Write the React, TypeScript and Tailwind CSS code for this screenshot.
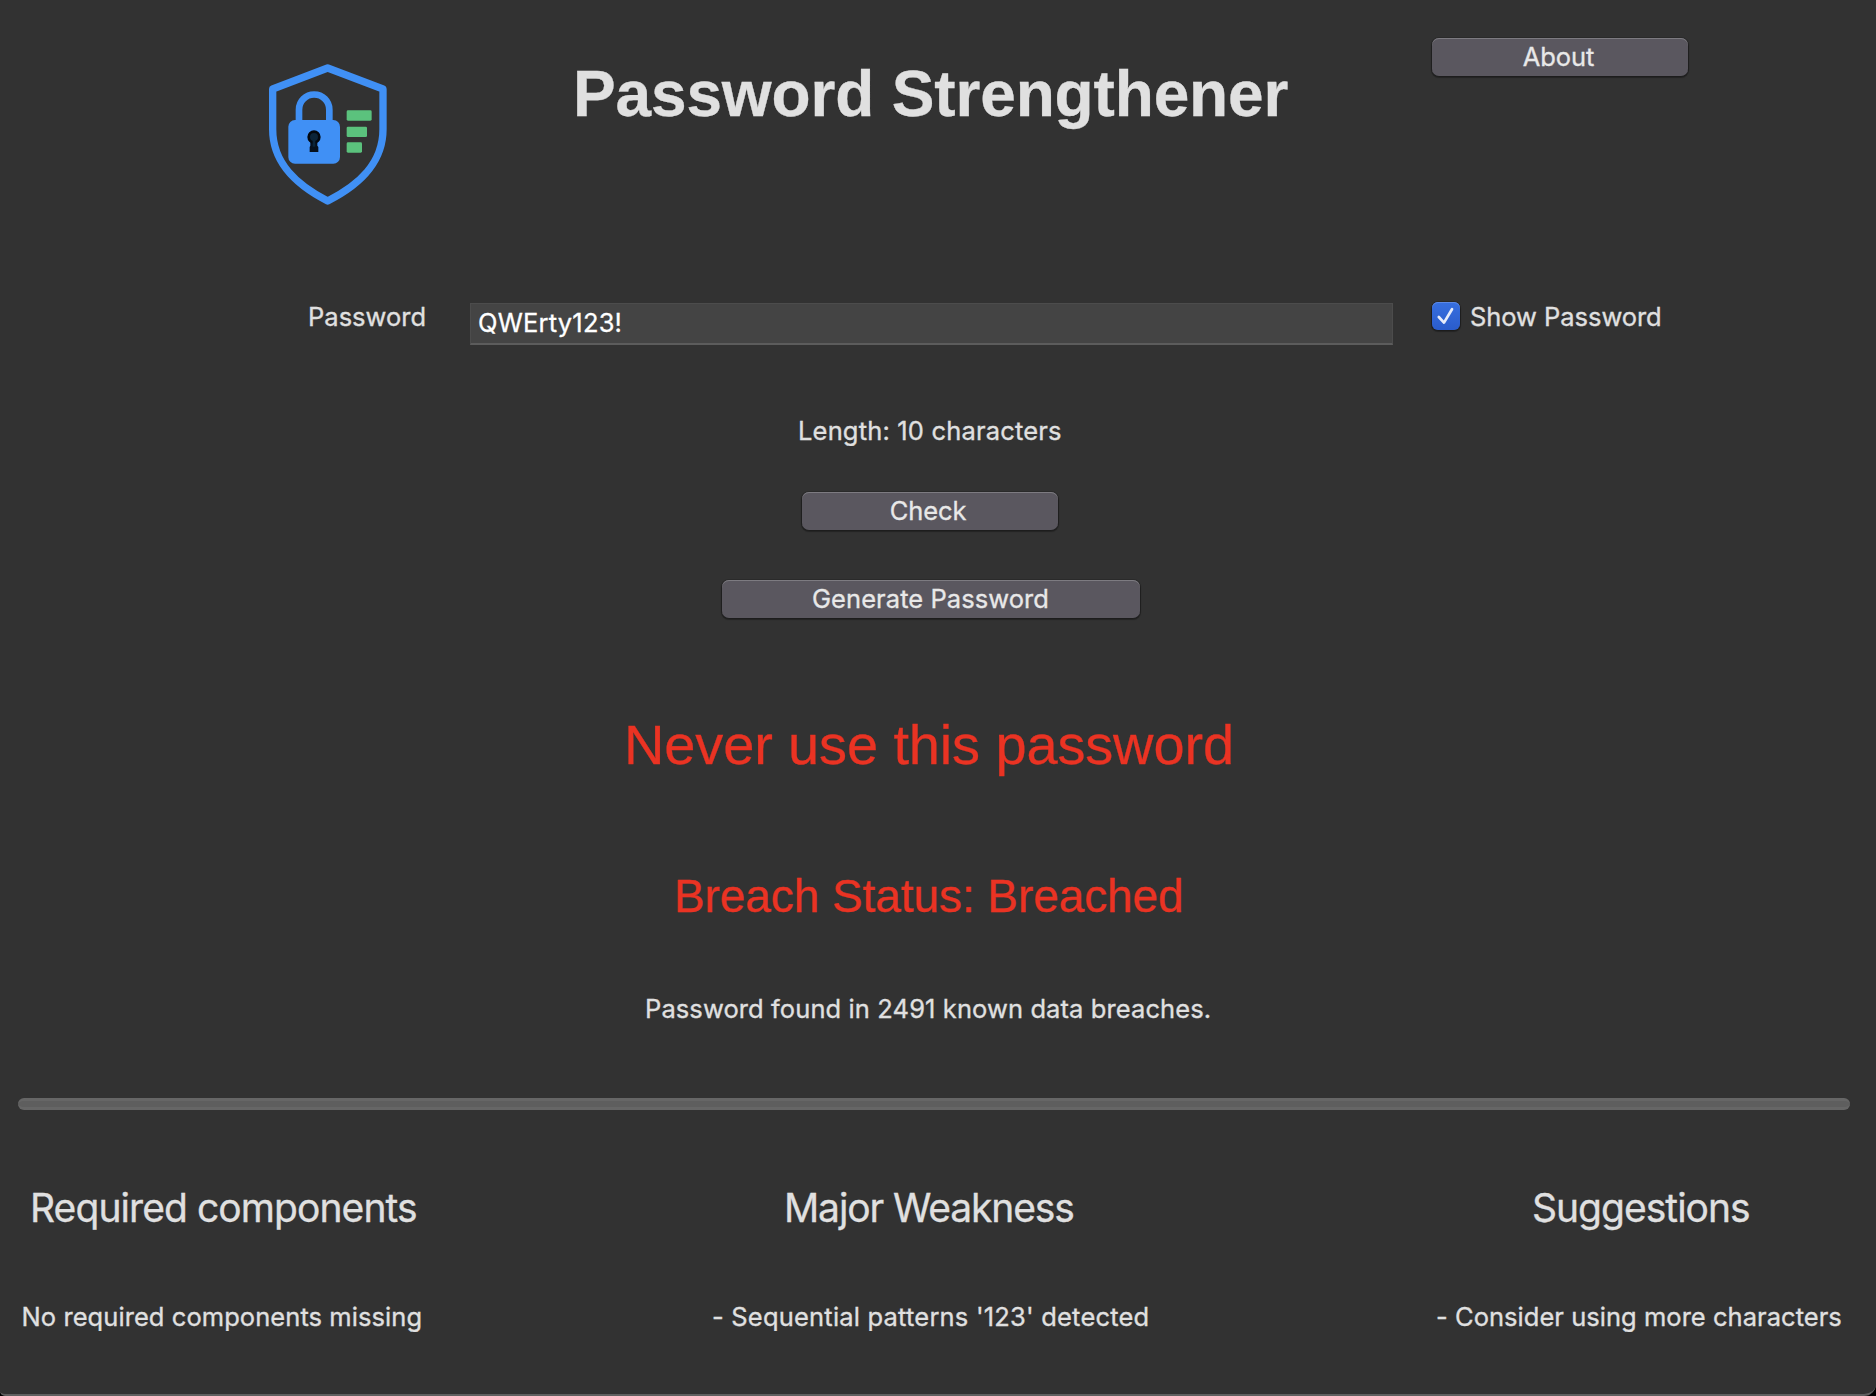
import type { ReactNode } from 'react';

function Logo() {
  return (
    <svg viewBox="0 0 480 510" className="h-[170px] w-[160px]" fill="none">
      <path d="M233 54 L399 117 V238 C399 340 328 405 233 453 C139 405 68 340 68 238 V117 Z" stroke="#4090f5" strokeWidth="22" strokeLinejoin="round" />
      <path d="M147 220 V179 a45.5 45.5 0 0 1 91 0 V220" stroke="#4090f5" strokeWidth="20" />
      <rect x="115" y="210" width="155" height="131" rx="20" fill="#4090f5" />
      <path d="M181 272 H202 V287 L205 291 V306 H179 V291 L181 287 Z" fill="#06101c" />
      <circle cx="192" cy="261" r="16" fill="#0b2438" stroke="#03080e" strokeWidth="8" />
      <rect x="188" y="268" width="8" height="22" fill="#0b2438" />
      <rect x="290" y="181" width="75" height="31" rx="4" fill="#5bc27d" />
      <rect x="290" y="230" width="61" height="31" rx="4" fill="#5bc27d" />
      <rect x="290" y="277" width="46" height="31" rx="4" fill="#5bc27d" />
    </svg>
  );
}

function PushButton({ className, children }: { className: string; children: ReactNode }) {
  return (
    <button
      className={`block h-[38px] rounded-[7px] bg-[#5a575f] text-center leading-[38px] text-[#e8e8e8] shadow-[inset_0_1px_0_#7d7b81,0_0_0_1px_rgba(0,0,0,0.12),0_1px_1px_1px_rgba(0,0,0,0.3)] ${className}`}
    >
      {children}
    </button>
  );
}

export default function App() {
  return (
    <div className="flex h-[1396px] w-[1876px] flex-col overflow-hidden bg-black">
      <main className="flex h-[1396px] flex-col overflow-hidden rounded-br-[12px] rounded-bl-[5px] border-b-2 border-[#606060] bg-[#323232] font-['Inter',sans-serif] text-[25.5px] leading-8 whitespace-nowrap text-[#e0e0e0] [-webkit-text-stroke:0.3px_currentColor]">
        <header className="flex h-[301px] shrink-0 items-start">
          <div className="w-[573px] shrink-0 pt-[50px] pl-[250px]">
            <Logo />
          </div>
          <h1 className="w-[859px] shrink-0 pt-[58px] font-['Liberation_Sans',sans-serif] text-[64px] leading-[72px] font-bold tracking-[-0.15px]">
            Password Strengthener
          </h1>
          <div className="pt-[38px]">
            <PushButton className="w-[256px] pr-[3px] tracking-[-0.1px]">About</PushButton>
          </div>
        </header>

        <section className="flex h-[44px] shrink-0 items-start">
          <label className="w-[469.5px] shrink-0 pl-[308px] tracking-[0.02px]">Password</label>
          <div className="mt-0.5 h-[42px] w-[923px] shrink-0 border border-b-2 border-[#4c4c4c] border-b-[#5c5c5c] bg-[#444444] pt-[3px] pl-[7.5px] tracking-[0.2px] text-white">
            QWErty123!
          </div>
          <div className="ml-[39.5px] flex">
            <div className="mt-px flex size-7 items-center justify-center rounded-[6px] bg-linear-to-b from-[#376fe0] to-[#2a5ccb] shadow-[inset_0_1px_0_#5c89e6,0_0_0_1px_rgba(0,0,0,0.15),0_1px_1px_1px_rgba(0,0,0,0.3)]">
              <svg viewBox="0 0 28 28" className="size-7" fill="none">
                <path d="M6.8 15 L12 20.6 L20 7.2" stroke="#e6ecfa" strokeWidth="2.7" strokeLinecap="round" strokeLinejoin="round" />
              </svg>
            </div>
            <span className="ml-[10px] tracking-[-0.05px]">Show Password</span>
          </div>
        </section>

        <section className="flex shrink-0 flex-col items-start">
          <p className="mt-[70px] ml-[798px] tracking-[0.17px]">Length: 10 characters</p>
          <PushButton className="mt-[45px] ml-[802px] w-[256px] pr-1 tracking-[-0.12px]">Check</PushButton>
          <PushButton className="mt-[50px] ml-[722px] w-[418px] pr-px tracking-[0.06px]">Generate Password</PushButton>
          <p className="mt-[95px] ml-[624px] font-['Liberation_Sans',sans-serif] text-[56px] leading-[64px] tracking-[-0.14px] text-[#ea3323]">
            Never use this password
          </p>
          <p className="mt-[91px] ml-[674px] font-['Liberation_Sans',sans-serif] text-[46px] leading-[56px] tracking-[-0.08px] text-[#ea3323]">
            Breach Status: Breached
          </p>
          <p className="mt-[69px] ml-[645px] tracking-[0.1px]">Password found in 2491 known data breaches.</p>
        </section>

        <div className="mt-[73px] ml-[18px] h-3 w-[1832px] shrink-0 rounded-full border-y-[3px] border-[#666666] bg-[#5e5e5e]" />

        <section className="mt-[74px] grid shrink-0 grid-cols-[690px_723px_1fr] gap-y-[69px]">
          <h2 className="pl-[30px] text-[39px] leading-[48px] tracking-[-0.92px]">Required components</h2>
          <h2 className="pl-[94px] text-[39px] leading-[48px] tracking-[-1.12px]">Major Weakness</h2>
          <h2 className="pl-[119px] text-[39px] leading-[48px] tracking-[-0.98px]">Suggestions</h2>
          <p className="pl-[21.5px] tracking-[0.07px]">No required components missing</p>
          <p className="pl-[22px] tracking-[0.2px]">- Sequential patterns '123' detected</p>
          <p className="pl-[23px] tracking-[0.035px]">- Consider using more characters</p>
        </section>
      </main>
    </div>
  );
}
